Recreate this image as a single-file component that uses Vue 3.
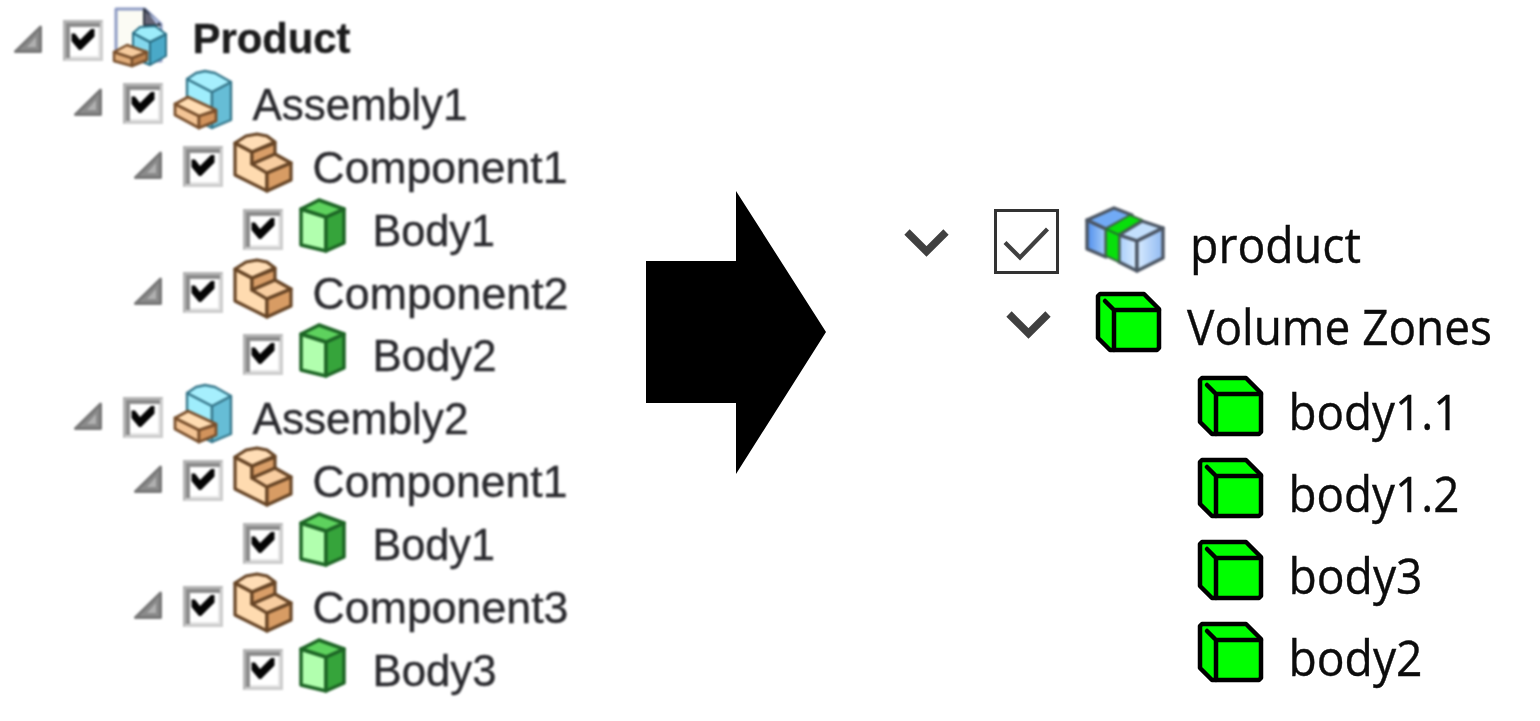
<script setup>
const source = [
  { label: 'Product', level: 0, kind: 'product', width: 158, base: 44 },
  { label: 'Assembly1', level: 1, kind: 'assembly', width: 215 },
  { label: 'Component1', level: 2, kind: 'component', width: 255 },
  { label: 'Body1', level: 3, kind: 'body', width: 122.5 },
  { label: 'Component2', level: 2, kind: 'component', width: 256 },
  { label: 'Body2', level: 3, kind: 'body', width: 124 },
  { label: 'Assembly2', level: 1, kind: 'assembly', width: 216 },
  { label: 'Component1', level: 2, kind: 'component', width: 255 },
  { label: 'Body1', level: 3, kind: 'body', width: 122.5 },
  { label: 'Component3', level: 2, kind: 'component', width: 256 },
  { label: 'Body3', level: 3, kind: 'body', width: 124 },
]
const zones = [
  { label: 'body1.1', width: 171 },
  { label: 'body1.2', width: 171 },
  { label: 'body3', width: 134 },
  { label: 'body2', width: 134 },
]
</script>

<template>
  <main class="page">
    <section class="source">
      <div v-for="(n, i) in source" :key="i" class="row" :class="'level-' + n.level">
        <svg class="toggle" width="50" height="62">
          <g v-if="n.kind !== 'body'">
            <path d="M15.500 42.500L40.500 18V42.500Z" fill="#8b8b8b" stroke="#777" stroke-width="3" stroke-linejoin="round" />
            <path d="M27 38L36 28V38Z" fill="#b0b0b0" />
          </g>
        </svg>
        <svg class="check" width="63" height="62">
          <rect x="13" y="11" width="40" height="41" fill="#cdcdcd" />
          <path d="M13 52V11H53L49 15H17V48Z" fill="#b4b4b4" />
          <rect x="16" y="14" width="34" height="35" fill="#e6e6e6" />
          <path d="M16 49V14H50V18H20V49Z" fill="#8c8c8c" />
          <rect x="20" y="18" width="28" height="29" fill="#fff" />
          <path d="M21.500 24.500H25L30 31L41 20H44.500V27.500L31 41H29L21.500 32Z" fill="#040404" />
        </svg>
        <svg class="icon" width="80" height="62" stroke-linejoin="round">
          <g v-if="n.kind === 'product'">
            <path d="M3 0H32L48 15V52H3Z" fill="#fbfbf4" stroke="#8e9bc4" stroke-width="3" />
            <path d="M31 0L47 16H31Z" fill="#667" stroke="#333a46" stroke-width="2" />
            <path d="M35 4L46 12L44 16Z" fill="#aab6d8" />
            <g stroke="#2c6f85" stroke-width="2">
              <path d="M20 24L37 33V56L20 49Z" fill="#83d7ec" />
              <path d="M37 33L53 25V47L37 56Z" fill="#4aa9c8" />
              <path d="M20 24L27 18L42 17L53 25L37 33Z" fill="#9cecfa" />
            </g>
            <g stroke="#79502d" stroke-width="2.500">
              <path d="M1 43L19 49V57L1 52Z" fill="#e2ae7b" />
              <path d="M19 49L34 43V51L19 57Z" fill="#bd8350" />
              <path d="M1 43L14 36L34 43L19 49Z" fill="#f6cb9e" />
            </g>
          </g>
          <g v-else-if="n.kind === 'assembly'">
            <g stroke="#38788c" stroke-width="2.400">
              <path d="M14 7L39 20V56L14 44Z" fill="#9fedfc" />
              <path d="M39 20L58 10V48L39 56Z" fill="#66bdd6" />
              <path d="M14 7L23 1L32 -1L42 1L58 10L39 20Z" fill="#a6effd" />
            </g>
            <g stroke="#79502d" stroke-width="2.800">
              <path d="M2 32L26 44V56L2 43Z" fill="#f4c596" />
              <path d="M26 44L43 39V49L26 56Z" fill="#d2935c" />
              <path d="M2 32L15 25L43 38L26 44Z" fill="#ffdcb2" />
            </g>
          </g>
          <g v-else-if="n.kind === 'component'" stroke="#664425" stroke-width="3.200">
            <path d="M2 8L19 17V29L34 38V56L2 40Z" fill="#ffdbb0" />
            <path d="M19 17L42 8V20L19 29Z" fill="#d99e68" />
            <path d="M2 8L13 1L24 -1L34 1L42 7L19 17Z" fill="#ffddb6" />
            <path d="M19 29L42 19L58 28L34 38Z" fill="#f8cda0" />
            <path d="M34 38L58 28V45L34 56Z" fill="#d89c64" />
          </g>
          <g v-else stroke="#1d6525" stroke-width="3.500">
            <path d="M8 11L33 19V53L8 47Z" fill="#b1ffae" />
            <path d="M33 19L51 11V45L33 53Z" fill="#36a43b" />
            <path d="M8 11L26 2L51 11L33 19Z" fill="#5ed25e" />
          </g>
        </svg>
        <svg class="label" :width="n.width" height="62">
          <text
            x="-0.500"
            :y="n.base || 48"
            :textLength="n.width"
            lengthAdjust="spacingAndGlyphs"
            :class="{ strong: n.level === 0 }"
          >{{ n.label }}</text>
        </svg>
      </div>
    </section>

    <svg class="arrow" width="180" height="283" viewBox="0 0 180 283">
      <path d="M0 70H90V0L180 141L90 283V212H0Z" />
    </svg>

    <section class="result">
      <div class="zone root">
        <svg class="chev" width="60" height="82">
          <path d="M6 32L25.500 51.500L45 32" fill="none" stroke="#404040" stroke-width="7.500" />
        </svg>
        <svg class="box" width="64" height="82">
          <rect x="1.500" y="10.500" width="62" height="62" fill="#fff" stroke="#333" stroke-width="3" />
          <path d="M11 42.500L26 57.500L53.500 29" fill="none" stroke="#404040" stroke-width="4.200" />
        </svg>
        <svg class="blocks" width="82" height="82" stroke-linejoin="round">
          <defs>
            <linearGradient id="deep"><stop offset="0" stop-color="#4f8eec" /><stop offset="1" stop-color="#a9cff9" /></linearGradient>
            <linearGradient id="pale"><stop offset="0" stop-color="#a9cdfa" /><stop offset="1" stop-color="#d8ecff" /></linearGradient>
            <linearGradient id="side"><stop offset="0" stop-color="#d8ebff" /><stop offset="1" stop-color="#90baf2" /></linearGradient>
          </defs>
          <g stroke="#4b5563" stroke-width="3.400">
            <path d="M3 20L22 29V57L3 49Z" fill="url(#deep)" />
            <path d="M3 20L30 8L48 15L22 29Z" fill="#71aaf5" />
            <path d="M35 35L58 21L79 28L53 41Z" fill="#c3dffc" />
            <path d="M35 35L53 41V71L35 62Z" fill="url(#pale)" />
            <path d="M53 41L79 28V58L53 71Z" fill="url(#side)" />
          </g>
          <path d="M22 29L46 15L58 20L35 34V62L22 56Z" fill="#08df0b" stroke="#3c6b45" stroke-width="2" />
          <path d="M22 29L35 35" stroke="#21752d" stroke-width="2" />
        </svg>
        <svg class="zlabel" width="172" height="82">
          <text x="2" y="63" textLength="171" lengthAdjust="spacingAndGlyphs">product</text>
        </svg>
      </div>
      <div class="zone group">
        <svg class="chev" width="60" height="82">
          <path d="M6 32L25.500 51.500L45 32" fill="none" stroke="#404040" stroke-width="7.500" />
        </svg>
        <svg class="cube" width="65" height="82">
          <path d="M2 14L4 12H48L63 27V66L61 68H14L2 56Z" fill="#0f0" stroke="#000" stroke-width="4.500" stroke-linejoin="round" />
          <path d="M9 19L18 28M18 68V28H63" fill="none" stroke="#000" stroke-width="4.500" stroke-linecap="round" />
        </svg>
        <svg class="zlabel" width="305" height="82">
          <text x="1" y="63" textLength="305" lengthAdjust="spacingAndGlyphs">Volume Zones</text>
        </svg>
      </div>
      <div class="leaves">
        <div v-for="z in zones" :key="z.label" class="zone leaf">
          <svg class="cube" width="65" height="82">
            <path d="M2 14L4 12H48L63 27V66L61 68H14L2 56Z" fill="#0f0" stroke="#000" stroke-width="4.500" stroke-linejoin="round" />
            <path d="M9 19L18 28M18 68V28H63" fill="none" stroke="#000" stroke-width="4.500" stroke-linecap="round" />
          </svg>
          <svg class="zlabel" :width="z.width" height="82">
            <text x="1.500" y="64" :textLength="z.width" lengthAdjust="spacingAndGlyphs">{{ z.label }}</text>
          </svg>
        </div>
      </div>
    </section>
  </main>
</template>

<style scoped>
.page { display: flex; width: 1540px; height: 721px; background: #fff; overflow: hidden; }
svg { display: block; flex: none; overflow: visible; }
.source { width: 646px; flex: none; padding-top: 9px; box-sizing: border-box; }
.row { display: flex; height: 62.9px; }
.level-1 { padding-left: 60px; }
.level-2 { padding-left: 120px; }
.level-3 { padding-left: 180px; }
.toggle, .check, .icon { filter: blur(1px); }
.label { filter: blur(0.8px); }
.label text { font-family: "Liberation Sans", Arial, sans-serif; font-size: 45px; fill: #2a2a2e; stroke: #2a2a2e; stroke-width: 0.4px; }
.label .strong { font-size: 43px; font-weight: 700; fill: #1b1b1b; }
.arrow { margin-top: 191px; }
.result { padding-top: 200px; }
.zone { display: flex; height: 82px; }
.root { padding-left: 75px; }
.root .chev { margin-right: 33px; }
.root .box { margin-right: 26px; }
.group { padding-left: 177px; }
.group .chev { margin-right: 33px; }
.group .cube { margin-right: 25px; }
.leaves { padding-top: 2px; }
.leaf { padding-left: 372px; }
.leaf .cube { margin-right: 24px; }
.chev, .box, .cube, .zlabel { filter: blur(0.5px); }
.root .blocks { margin-right: 22px; filter: blur(0.9px); }
.zlabel text { font-family: "Open Sans", "Noto Sans", sans-serif; font-size: 49px; fill: #0c0c0c; stroke: #0c0c0c; stroke-width: 0.4px; }
</style>
